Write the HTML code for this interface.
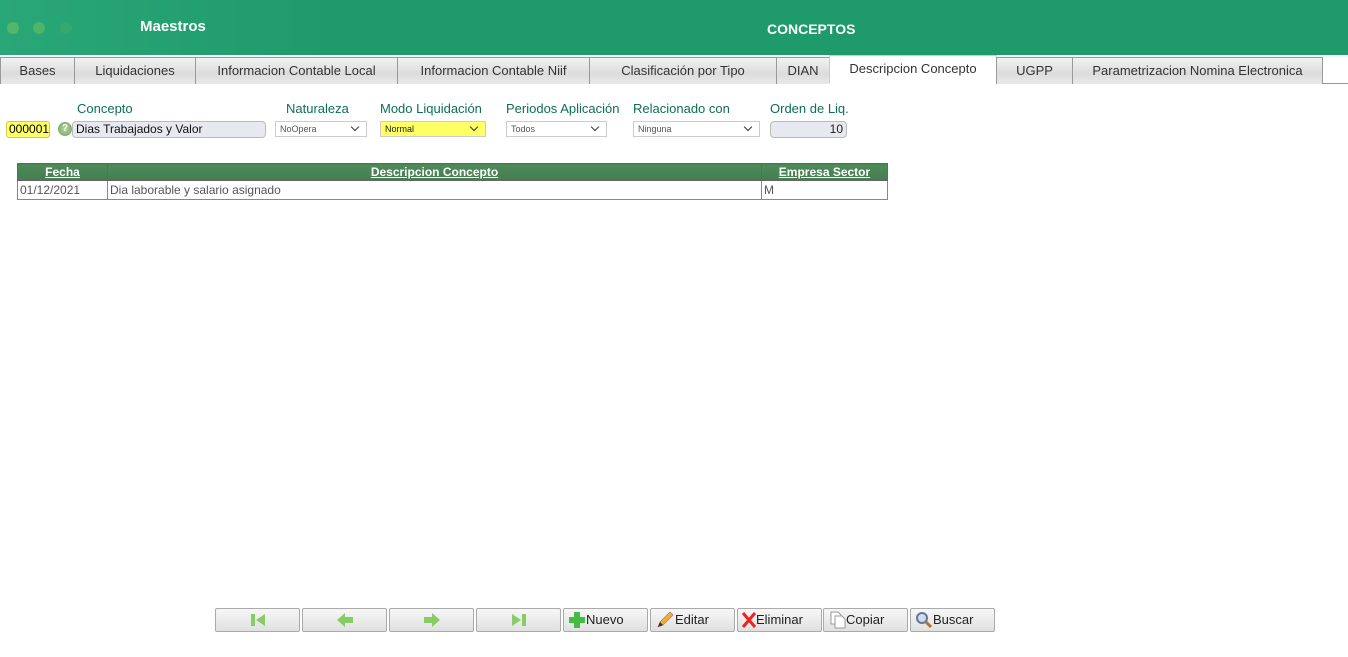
<!DOCTYPE html>
<html><head><meta charset="utf-8"><style>
*{box-sizing:border-box;margin:0;padding:0}
body{width:1348px;height:657px;background:#fff;font-family:"Liberation Sans",sans-serif;position:relative;overflow:hidden}
.hdr{position:absolute;left:0;top:0;width:1348px;height:55px;background:linear-gradient(90deg,#2aa777 0%,#1e9a6b 25%,#1e9a6b 100%)}
.dot{position:absolute;top:22px;width:12px;height:12px;border-radius:50%}
.hdr .t{position:absolute;color:#fff;font-weight:bold;font-size:15px;top:18px}
.tabs{position:absolute;top:56px;left:0;width:1348px;height:28px;border-bottom:1px solid #999}
.tab{position:absolute;top:1px;height:27px;border:1px solid #999;border-bottom:none;background:linear-gradient(#f2f2f2,#dcdcdc 60%,#e8e8e8);font-size:13px;color:#333;text-align:center;line-height:25px;white-space:nowrap;overflow:hidden}
.tab.act{background:#fff;top:-1px;height:29px;border-color:#ccc;border-bottom:1px solid #fff}
.lbl{position:absolute;top:101px;font-size:13px;color:#0d6f55}
.sel{position:absolute;top:121px;height:16px;border:1px solid #ccc;font-size:9px;color:#555;padding-left:4px;line-height:14px;background:#fff}
.sel:after{content:"";position:absolute;right:8px;top:2px;width:5px;height:5px;border-right:1.5px solid #333;border-bottom:1.5px solid #333;transform:rotate(45deg)}
table{position:absolute;left:17px;top:163px;width:871px;border-collapse:collapse;font-size:12px}
th{background:linear-gradient(#4f8a5a,#447e50);color:#fff;text-decoration:underline;height:17px;border:1px solid #666;font-size:12px}
td{border:1px solid #888;height:19px;color:#555;padding-left:2px}
.btn{position:absolute;top:608px;width:85px;height:24px;border:1px solid #aaa;border-radius:2px;background:linear-gradient(#f7f7f7,#e0e0e0);font-size:13px;color:#222;line-height:22px;display:flex;align-items:center}
.btn svg{display:block}
.nav{justify-content:center}
</style></head><body>
<div class="hdr">
<div class="dot" style="left:7px;background:#5cbb63;opacity:.8"></div>
<div class="dot" style="left:33px;background:#5cbb63;opacity:.7"></div>
<div class="dot" style="left:60px;background:#3fae6a;opacity:.5"></div>
<div class="t" style="left:140px">Maestros</div>
<div class="t" style="left:767px;top:21px;font-size:14px">CONCEPTOS</div>
</div>
<div class="tabs">
<div class="tab" style="left:0;width:75px">Bases</div>
<div class="tab" style="left:74px;width:122px">Liquidaciones</div>
<div class="tab" style="left:195px;width:203px">Informacion Contable Local</div>
<div class="tab" style="left:397px;width:193px">Informacion Contable Niif</div>
<div class="tab" style="left:589px;width:188px">Clasificación por Tipo</div>
<div class="tab" style="left:776px;width:54px">DIAN</div>
<div class="tab act" style="left:829px;width:168px">Descripcion Concepto</div>
<div class="tab" style="left:996px;width:77px">UGPP</div>
<div class="tab" style="left:1072px;width:251px">Parametrizacion Nomina Electronica</div>
</div>
<div class="lbl" style="left:77px">Concepto</div>
<div class="lbl" style="left:286px">Naturaleza</div>
<div class="lbl" style="left:380px">Modo Liquidación</div>
<div class="lbl" style="left:506px">Periodos Aplicación</div>
<div class="lbl" style="left:633px">Relacionado con</div>
<div class="lbl" style="left:770px">Orden de Liq.</div>
<div style="position:absolute;left:6px;top:121px;width:44px;height:17px;background:#ffff66;border:1px solid #cccc55;border-radius:3px;font-size:12px;line-height:15px;padding-left:2px">000001</div>
<div style="position:absolute;left:58px;top:122px;width:14px;height:14px;border-radius:50%;background:radial-gradient(#b8dca0,#6a9a58);color:#fff;font-size:10px;text-align:center;line-height:14px;font-weight:bold">?</div>
<div style="position:absolute;left:72px;top:121px;width:194px;height:17px;background:#e8e8f0;border:1px solid #bbb;border-radius:4px;font-size:12px;line-height:15px;padding-left:3px;color:#111">Dias Trabajados y Valor</div>
<div class="sel" style="left:275px;width:92px">NoOpera</div>
<div class="sel" style="left:380px;width:106px;background:#ffff66;color:#222">Normal</div>
<div class="sel" style="left:506px;width:101px">Todos</div>
<div class="sel" style="left:633px;width:127px">Ninguna</div>
<div style="position:absolute;left:770px;top:121px;width:77px;height:17px;background:#e8e8f0;border:1px solid #bbb;border-radius:4px;font-size:12px;line-height:15px;text-align:right;padding-right:3px;color:#222">10</div>
<table><tr><th style="width:90px">Fecha</th><th style="width:654px">Descripcion Concepto</th><th>Empresa Sector</th></tr>
<tr><td>01/12/2021</td><td>Dia laborable y salario asignado</td><td>M</td></tr></table>
<div class="btn nav" style="left:215px"><svg width="18" height="16"><rect x="2" y="2" width="4" height="12" fill="#8c6"/><path d="M16 2 L7 8 L16 14Z" fill="#8c6"/></svg></div>
<div class="btn nav" style="left:302px"><svg width="18" height="16"><path d="M1 8 L9 1 L9 5 L17 5 L17 11 L9 11 L9 15Z" fill="#8c6"/></svg></div>
<div class="btn nav" style="left:389px"><svg width="18" height="16"><path d="M17 8 L9 1 L9 5 L1 5 L1 11 L9 11 L9 15Z" fill="#8c6"/></svg></div>
<div class="btn nav" style="left:476px"><svg width="18" height="16"><path d="M2 2 L11 8 L2 14Z" fill="#8c6"/><rect x="12" y="2" width="4" height="12" fill="#8c6"/></svg></div>
<div class="btn" style="left:563px;padding-left:4px"><svg width="18" height="18"><path d="M6 1h6v5h5v6h-5v5H6v-5H1V6h5Z" fill="#4b4"/></svg>Nuevo</div>
<div class="btn" style="left:650px;padding-left:4px"><svg width="20" height="18"><path d="M3 16 L5 11 L15 1 L18 4 L8 14Z" fill="#f0b030" stroke="#a66" stroke-width=".6"/><path d="M3 16 L5 11 L8 14Z" fill="#333"/></svg>Editar</div>
<div class="btn" style="left:737px;padding-left:4px"><svg width="14" height="18"><path d="M1 2 L13 16 M13 2 L1 16" stroke="#e22" stroke-width="3"/></svg>Eliminar</div>
<div class="btn" style="left:823px;padding-left:6px"><svg width="16" height="18"><path d="M1 1h7l3 3v9H1Z" fill="#fff" stroke="#999"/><path d="M5 5h7l3 3v9H5Z" fill="#fff" stroke="#999"/></svg>Copiar</div>
<div class="btn" style="left:910px;padding-left:4px"><svg width="18" height="18"><circle cx="7" cy="7" r="5" fill="#cde" stroke="#679" stroke-width="2"/><path d="M11 11 L16 16" stroke="#a73" stroke-width="3"/></svg>Buscar</div>
</body></html>
